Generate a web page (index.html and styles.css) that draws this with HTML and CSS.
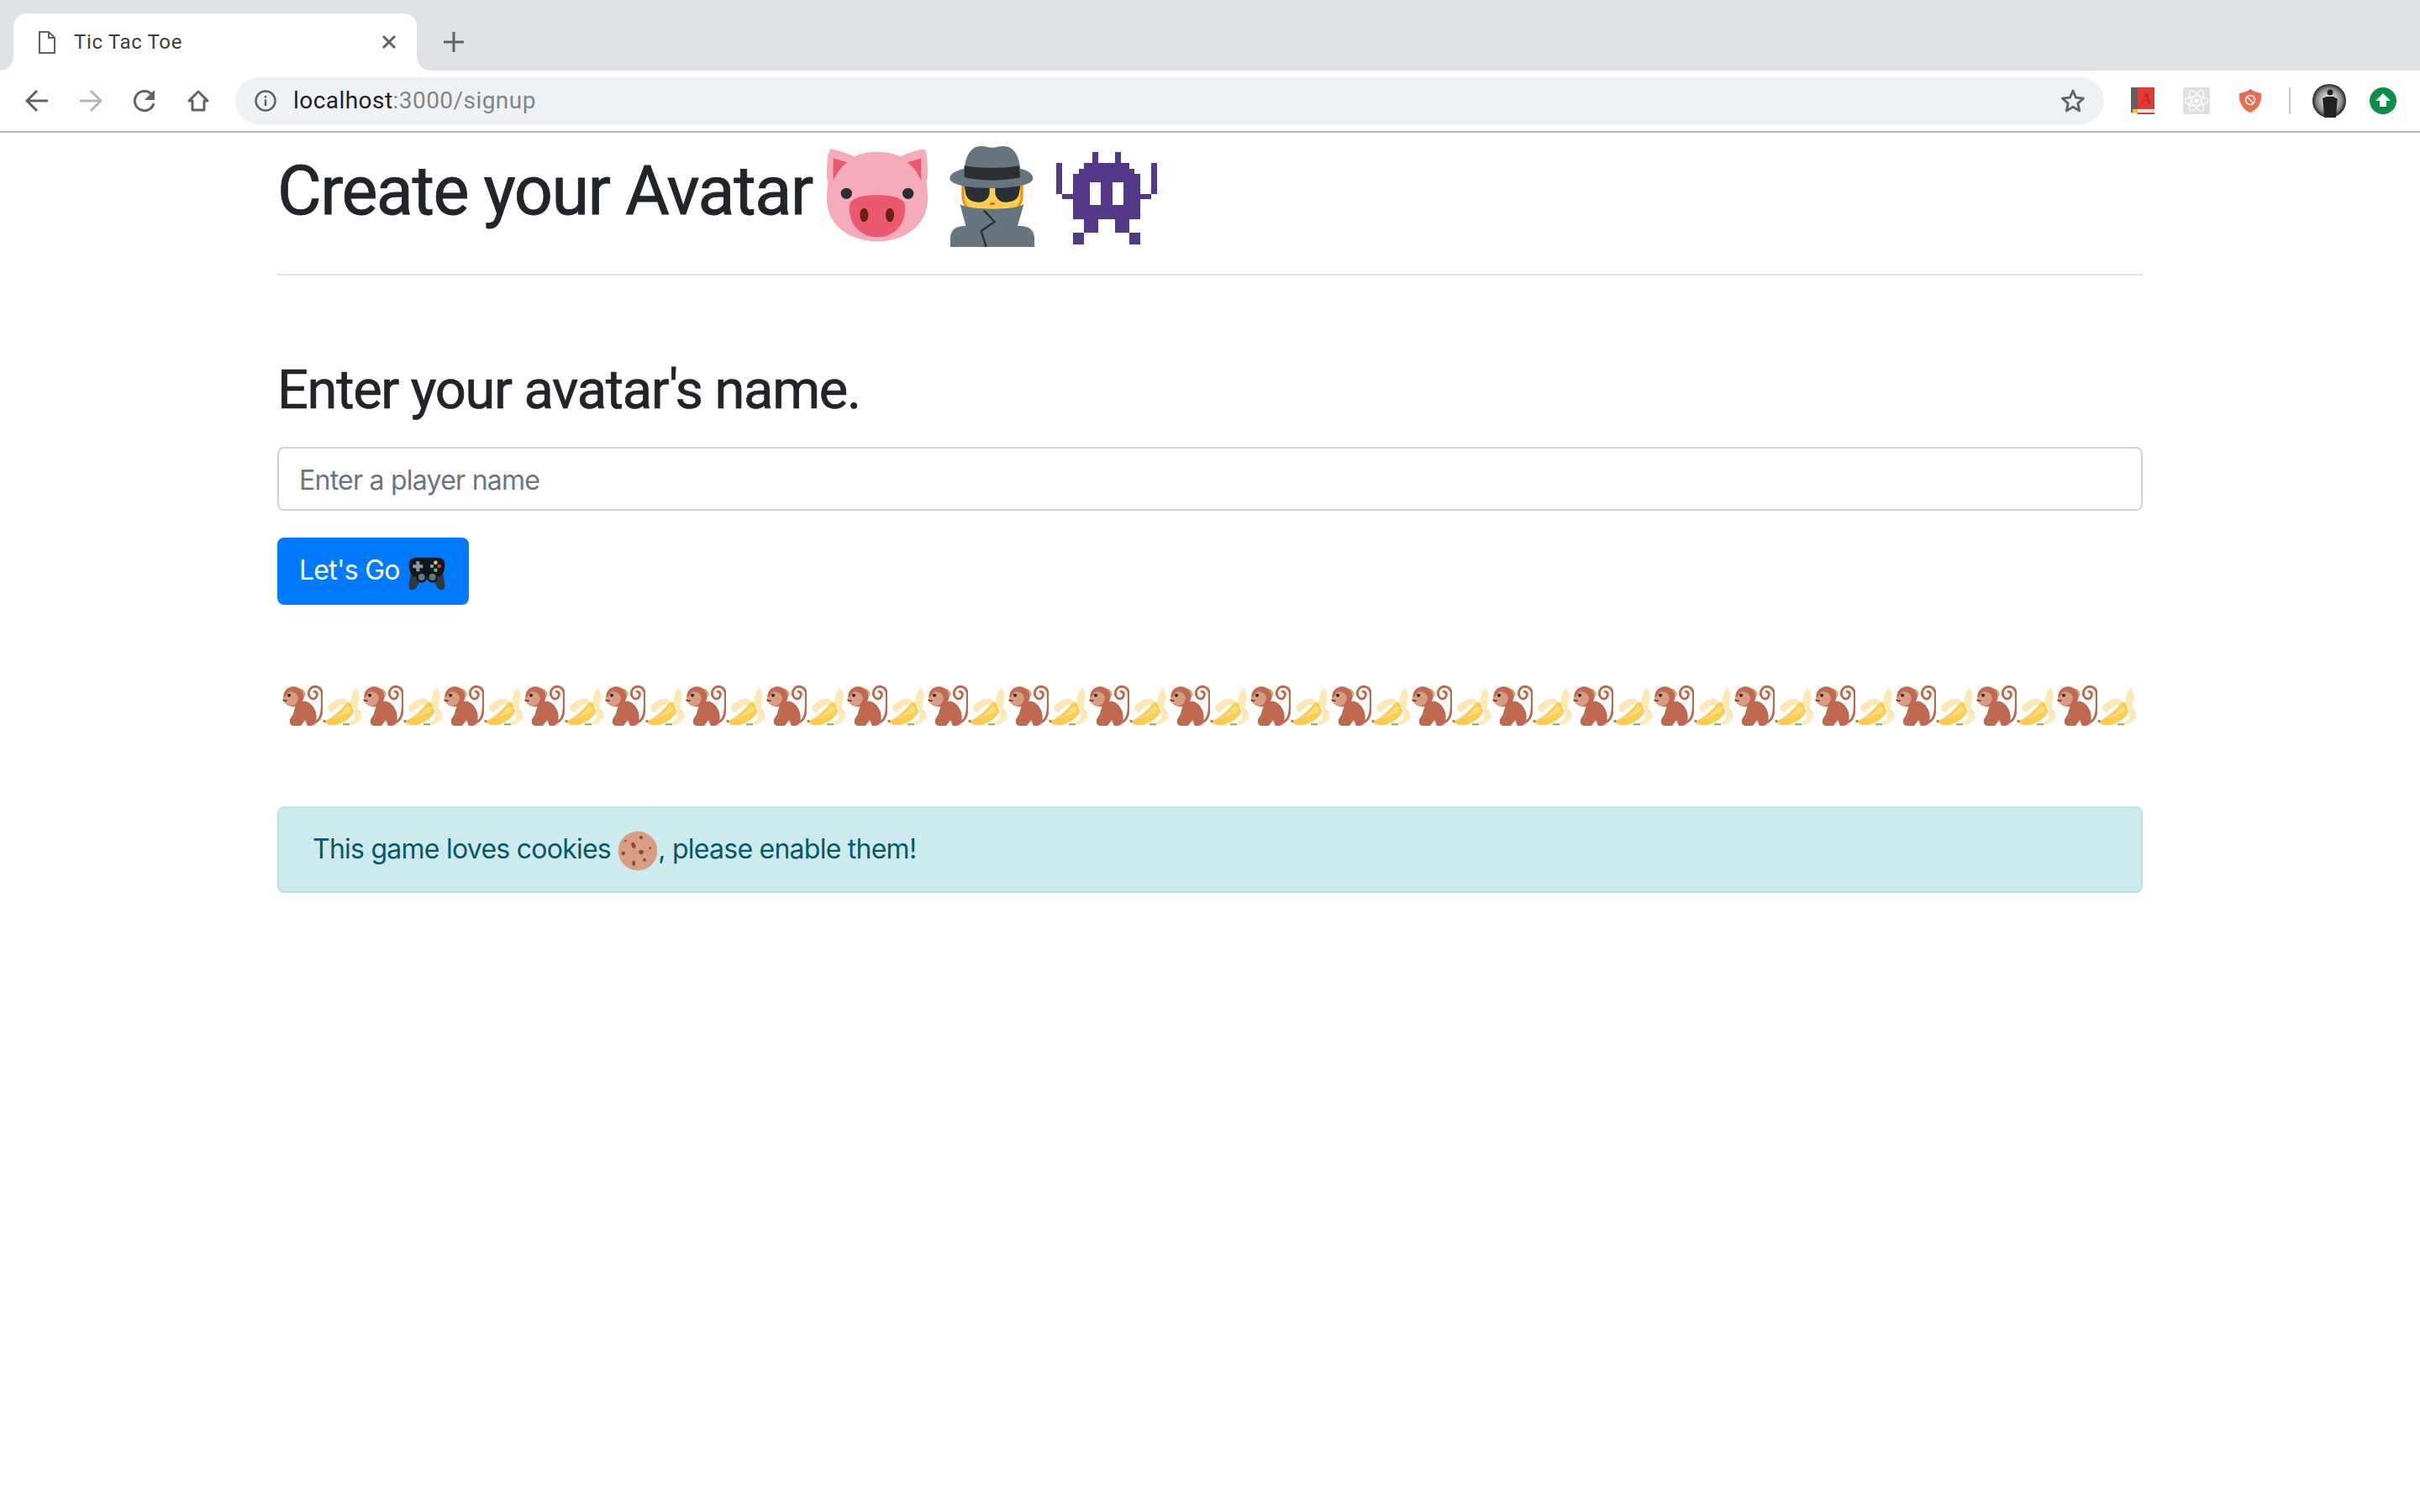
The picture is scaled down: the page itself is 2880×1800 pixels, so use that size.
FILE: index.html
```html
<!DOCTYPE html>
<html lang="en">
<head>
    <meta charset="UTF-8">
    <meta name="viewport" content="width=device-width, initial-scale=1.0">
    <title>Tic Tac Toe</title>
    <link rel="stylesheet" href="styles.css">
</head>
<body>
    <svg class="defs" aria-hidden="true">
        <symbol id="monkey" viewBox="0 0 36 36">
            <path d="M29 33C34 31 35.500 25 35.500 18V8C35.500 4 33 1 29 1 26 1 23.500 4 23.500 7 23.500 10 25.500 12 27.500 12 29.500 12 31 10 31 8 31 6.500 30 5.500 28.500 5.500" fill="none" stroke="#C1694F" stroke-width="2.200" stroke-linecap="round"/>
            <path d="M13 14h8c6 2 9.500 8 9.500 14 0 4-1 8-5 8h-3c-1-2-2-4-2-5l-4 5h-7c-3-1-3.500-3-2.500-6 1-2 3-4 3-6z" fill="#C1694F"/>
            <circle cx="16" cy="7.500" r="4.500" fill="#D99E82"/>
            <circle cx="10" cy="10" r="9" fill="#C1694F"/>
            <path d="M0 13c1-2 3-3 4-5 1-3 4-3 6-2 4 1 5 6 3 9-2 3-6 4-8 3-2-1-4-3-5-5z" fill="#D99E82"/>
            <circle cx="6" cy="8.800" r="1.500" fill="#292F33"/>
            <path d="M1 13c1 1 2 1 3 .5" fill="none" stroke="#662113" stroke-width="1" stroke-linecap="round"/>
        </symbol>
        <symbol id="banana" viewBox="0 0 36 36">
            <path d="M29 2C33 3 33 12 31 20L24 19C25 12 26 6 29 2z" fill="#FFE8B6"/>
            <path d="M4.500 20C6 15 13 11 20 12L25 17C18 16 12 19 9 24 7 24 5 23 4.500 20z" fill="#FFE8B6"/>
            <path d="M28 19C33 20 36 25 34 29 32 33 28 35 24 35L21 34C26 33 30 29 29 25z" fill="#FFE8B6"/>
            <path d="M1 32C6 30 15 24 19 18 21 15 24 14 25 16L28 23C27 27 20 33 13 35 8 36 2 35 1 32z" fill="#FFCC4D"/>
            <path d="M8 29C14 27 19 23 22 18L26 20C24 24 16 29 8 29z" fill="#FFD983"/>
            <circle cx="1.500" cy="31.800" r="1.200" fill="#C1694F"/>
            <path d="M18 34h6v1.500h-6z" fill="#77B255"/>
        </symbol>
        <symbol id="monkey-banana" viewBox="0 0 96 48">
            <use href="#monkey" x="0" y="0" width="48" height="48"/>
            <use href="#banana" x="48" y="0" width="48" height="48"/>
        </symbol>
    </svg>

    <header class="browser">
        <div class="tabstrip">
            <div class="tab">
                <svg class="tab-file" viewBox="0 0 20 27"><path d="M1 1h11l7 7v18H1zM12 1v7h7" fill="none" stroke="#5f6368" stroke-width="2"/></svg>
                <span class="tab-title">Tic Tac Toe</span>
                <svg class="tab-close" viewBox="0 0 18 18"><path d="M2 2l14 14M16 2L2 16" stroke="#5f6368" stroke-width="3"/></svg>
            </div>
            <svg class="new-tab" viewBox="0 0 24 24"><path d="M12 0v24M0 12h24" stroke="#5f6368" stroke-width="3"/></svg>
        </div>
        <div class="toolbar">
            <span class="nav-btn"><svg viewBox="0 0 28 28"><path d="M27 14H3M14 2L2 14l12 12" fill="none" stroke="#5f6368" stroke-width="3"/></svg></span>
            <span class="nav-btn"><svg viewBox="0 0 28 28"><path d="M1 14h24M14 2l12 12-12 12" fill="none" stroke="#b4b6b9" stroke-width="3"/></svg></span>
            <span class="nav-btn"><svg viewBox="0 0 28 28"><path d="M25 17a11.500 11.500 0 1 1-2.500-10.500" fill="none" stroke="#5f6368" stroke-width="3"/><path d="M26 1v12H14z" fill="#5f6368"/></svg></span>
            <span class="nav-btn"><svg viewBox="0 0 28 28"><path d="M14 3L3 14h4v11h14V14h4z" fill="none" stroke="#5f6368" stroke-width="3" stroke-linejoin="round"/></svg></span>
            <div class="omnibox">
                <svg class="info" viewBox="0 0 26 26"><circle cx="13" cy="13" r="11.500" fill="none" stroke="#5f6368" stroke-width="2.500"/><path d="M13 11.500V19M13 7v2.500" stroke="#5f6368" stroke-width="2.500"/></svg>
                <span class="url">localhost<span class="url-rest">:3000/signup</span></span>
                <svg class="star" viewBox="0 0 30 30"><path d="M15 3l3.600 8.200 8.900.9-6.700 6 1.900 8.800L15 22.300l-7.700 4.600 1.900-8.800-6.700-6 8.900-.9z" fill="none" stroke="#5f6368" stroke-width="2.800" stroke-linejoin="round"/></svg>
            </div>
            <div class="extensions">
                <span class="ext-btn"><svg viewBox="0 0 28 32">
                    <rect width="28" height="32" fill="#fff"/>
                    <rect x="0" y="0" width="8" height="30" fill="#616161"/>
                    <rect x="8" y="0" width="20" height="26" fill="#E53935"/>
                    <text x="18" y="20" class="book-letter">A</text>
                    <rect x="8" y="27" width="20" height="2" fill="#e0e0e0"/>
                    <rect x="8" y="30" width="20" height="2" fill="#E53935"/>
                    <path d="M2 26h6v6l-3-2-3 2z" fill="#FBC02D"/>
                </svg></span>
                <span class="ext-btn"><svg viewBox="0 0 32 32">
                    <rect width="32" height="32" rx="3" fill="#e0e0e0"/>
                    <g fill="none" stroke="#fff" stroke-width="1.200"><ellipse cx="16" cy="16" rx="14" ry="5.500"/><ellipse cx="16" cy="16" rx="14" ry="5.500" transform="rotate(60 16 16)"/><ellipse cx="16" cy="16" rx="14" ry="5.500" transform="rotate(120 16 16)"/></g>
                    <circle cx="16" cy="16" r="2.500" fill="#fff"/>
                </svg></span>
                <span class="ext-btn"><svg viewBox="0 0 32 32">
                    <defs><linearGradient id="shield-fill" x1="0" x2="0" y1="0" y2="1"><stop offset="0" stop-color="#F8615F"/><stop offset="1" stop-color="#E8713A"/></linearGradient></defs>
                    <path d="M16 2c4 3 8 4 13 5 1 10-3 19-13 23C6 26 2 17 3 7c5-1 9-2 13-5z" fill="url(#shield-fill)"/>
                    <circle cx="16" cy="15" r="5.500" fill="none" stroke="#fff" stroke-width="1.600"/><path d="M12.500 11.500l7 7" stroke="#fff" stroke-width="1.600"/>
                </svg></span>
                <span class="ext-divider"></span>
                <span class="ext-btn"><svg class="avatar" viewBox="0 0 40 40">
                    <defs><radialGradient id="avatar-bg"><stop offset="0.3" stop-color="#ddd"/><stop offset="0.75" stop-color="#888"/><stop offset="1" stop-color="#222"/></radialGradient></defs>
                    <circle cx="20" cy="20" r="20" fill="url(#avatar-bg)"/>
                    <circle cx="21" cy="10" r="3.500" fill="#222"/>
                    <path d="M12 17l5-2h8l5 3-1 8-1 14H14l-1-14z" fill="#222"/>
                </svg></span>
                <span class="ext-btn"><svg viewBox="0 0 32 32">
                    <circle cx="16" cy="16" r="16" fill="#0B8F44"/>
                    <path d="M16 7l9 9h-5v7h-8v-7H7z" fill="#fff"/>
                </svg></span>
            </div>
        </div>
    </header>

    <main class="container">
        <h1 class="page-title">Create your Avatar
            <svg class="emoji-big" viewBox="0 0 36 36">
                <path d="M0 11C0 6 .3 2 1.300 1 4 1.500 7.500 2.500 9.800 3.800 12 2.500 15 2 18 2s6 .5 8.200 1.800C28.500 2.500 32 1.500 34.800 1c1 1 1.200 5 1.200 10-.1.500-.2 1-.5 1.500.3 2 .5 4 .5 6.500 0 9-8 15-18 15S0 28 0 19c0-2.500.2-4.500.5-6.500-.3-.5-.4-1-.5-1.500z" fill="#F4ABBA"/>
                <path d="M2.300 4.300L7.300 5.800C5 7.500 3.300 10 2.300 12.300zM33.700 4.300L28.700 5.800c2.300 1.700 4 4.200 5 6.500z" fill="#EA596E"/>
                <circle cx="7" cy="16.900" r="2" fill="#292F33"/>
                <circle cx="29" cy="16.900" r="2" fill="#292F33"/>
                <path d="M8 22c0-3 3-4.500 10-4.500S28 19 28 22c0 6-4 10.500-10 10.500S8 28 8 22z" fill="#EA596E"/>
                <ellipse cx="13.300" cy="24.600" rx="1.500" ry="2.500" fill="#662113"/>
                <ellipse cx="22.500" cy="24.600" rx="1.500" ry="2.500" fill="#662113"/>
            </svg>
            <svg class="emoji-big" viewBox="0 0 36 36">
                <path d="M7 14c0-2 2-3 4-3h14c2 0 4 1 4 3v3c0 3-1 6-4 6H11c-3 0-4-3-4-6z" fill="#F4900C"/>
                <path d="M8 13h20v5c0 3-2 5-4 5H12c-2 0-4-2-4-5z" fill="#FFCC4D"/>
                <path d="M7.800 13h9.200v4c-.5 2-2 3-3.500 3-2 0-4.500-.5-5-3zM19 13h9.200l-.7 4c-.5 2.500-3 3-5 3-1.500 0-3-1-3.500-3z" fill="#292F33"/>
                <ellipse cx="18" cy="20.500" rx="1" ry=".5" fill="#C1694F"/>
                <path d="M2.800 11.500C2.800 9.500 6 8.500 8 8c.5-4 2-8 6-8 1.500 0 2.500.5 4 .5S20.500 0 22 0c4 0 5.500 4 6 8 2 .5 4.500 1.500 4.500 3.500 0 2-5 3.500-14.800 3.500S2.800 13.500 2.800 11.500z" fill="#66757F"/>
                <path d="M8 7c5 1 15 1 19.500 0l.5 4c-5 1.500-15 1.500-20 0z" fill="#292F33"/>
                <path d="M3 36v-3c0-3 2-4.500 5-4.500h.5L6.500 20.800C9 22 13 22.400 18 22.400s9-.4 11.200-1.600L27 28.500h1c3 0 5 1.500 5 4.500v3z" fill="#66757F"/>
                <path d="M15 23l3.800 4-4.800 3.300 1.800 5.700" fill="none" stroke="#292F33" stroke-width=".700"/>
            </svg>
            <svg class="emoji-big" viewBox="0 0 36 36" shape-rendering="crispEdges">
                <path fill-rule="evenodd" fill="#553788" d="M13 2h2v4h6V2h2v4h3v2h2v2h2v7h4V6h2v11h-2v2h-4v7h-4v5h4v4h-4v-4h-5v-5h-6v5h-5v4H6v-4h4v-5H6v-7H2v-2H0V6h2v11h4v-7h2V8h2V6h3zM12 13v8h4v-8zM20 13v8h4v-8z"/>
            </svg>
        </h1>
        <hr class="rule">

        <form class="signup">
            <h2 class="form-title">Enter your avatar's name.</h2>
            <input class="name-input" type="text" placeholder="Enter a player name">
            <button class="go-btn" type="button">Let's Go
                <svg class="emoji-small" viewBox="0 0 36 36">
                    <path d="M2 30c0 3 1 4 3 4 3 0 5-4 7-9h12c2 5 4 9 7 9 2 0 3-1 3-4 0-3-2-12-3-16H5C4 18 2 27 2 30z" fill="#31373D"/>
                    <path d="M2 11c0-4 3-6 6-6h20c3 0 6 2 6 6 0 5-1 11-7 11H9c-6 0-7-6-7-11z" fill="#14171A"/>
                    <circle cx="13.300" cy="23" r="4.500" fill="#14171A"/><circle cx="23" cy="23" r="4.500" fill="#14171A"/>
                    <circle cx="13.300" cy="22.500" r="3" fill="#66757F"/><circle cx="23" cy="22.500" r="3" fill="#66757F"/>
                    <path d="M8.500 8.500h3v3h3v3h-3v3h-3v-3h-3v-3h3z" fill="#8899A6"/>
                    <circle cx="25.800" cy="9.500" r="1.700" fill="#FFCC4D"/>
                    <circle cx="29" cy="12.800" r="1.700" fill="#DD2E44"/>
                    <circle cx="22.500" cy="12.800" r="1.700" fill="#55ACEE"/>
                    <circle cx="25.800" cy="16.300" r="1.700" fill="#77B255"/>
                </svg>
            </button>
        </form>

        <div class="monkey-row">
            <svg class="pair"><use href="#monkey-banana"/></svg>
            <svg class="pair"><use href="#monkey-banana"/></svg>
            <svg class="pair"><use href="#monkey-banana"/></svg>
            <svg class="pair"><use href="#monkey-banana"/></svg>
            <svg class="pair"><use href="#monkey-banana"/></svg>
            <svg class="pair"><use href="#monkey-banana"/></svg>
            <svg class="pair"><use href="#monkey-banana"/></svg>
            <svg class="pair"><use href="#monkey-banana"/></svg>
            <svg class="pair"><use href="#monkey-banana"/></svg>
            <svg class="pair"><use href="#monkey-banana"/></svg>
            <svg class="pair"><use href="#monkey-banana"/></svg>
            <svg class="pair"><use href="#monkey-banana"/></svg>
            <svg class="pair"><use href="#monkey-banana"/></svg>
            <svg class="pair"><use href="#monkey-banana"/></svg>
            <svg class="pair"><use href="#monkey-banana"/></svg>
            <svg class="pair"><use href="#monkey-banana"/></svg>
            <svg class="pair"><use href="#monkey-banana"/></svg>
            <svg class="pair"><use href="#monkey-banana"/></svg>
            <svg class="pair"><use href="#monkey-banana"/></svg>
            <svg class="pair"><use href="#monkey-banana"/></svg>
            <svg class="pair"><use href="#monkey-banana"/></svg>
            <svg class="pair"><use href="#monkey-banana"/></svg>
            <svg class="pair"><use href="#monkey-banana"/></svg>
        </div>

        <div class="alert">This game loves cookies
            <svg class="emoji-small" viewBox="0 0 36 36">
                <circle cx="18" cy="18" r="17.500" fill="#D99E82"/>
                <g fill="#8A4B38">
                    <ellipse cx="14.200" cy="13" rx="1.800" ry="2.800" transform="rotate(-20 14.200 13)"/>
                    <circle cx="21" cy="19" r="2"/>
                    <circle cx="5" cy="20" r="1.700"/>
                    <ellipse cx="14.400" cy="29" rx="1.300" ry="2.300"/>
                    <circle cx="24" cy="26" r="1.400"/>
                    <circle cx="21" cy="6" r="1.500"/>
                    <circle cx="7" cy="9" r="1"/>
                    <circle cx="29" cy="15.500" r="1"/>
                </g>
            </svg>, please enable them!</div>
    </main>
</body>
</html>
```

FILE: styles.css
```css
* {
    box-sizing: border-box;
}
html, body {
    margin: 0;
}
body {
    font-family: Inter, "Liberation Sans", sans-serif;
    font-size: 32px;
    line-height: 1.5;
    letter-spacing: -.75px;
    color: #212529;
    background-color: #fff;
}
.defs {
    display: none;
}

/* browser chrome */
.browser {
    font-family: Roboto, "Liberation Sans", sans-serif;
    letter-spacing: normal;
}
.tabstrip {
    display: flex;
    align-items: center;
    height: 84px;
    padding: 16px 0 0 16px;
    background-color: #dee1e6;
}
.tab {
    position: relative;
    display: flex;
    align-items: center;
    width: 480px;
    height: 68px;
    padding: 0 24px 0 30px;
    background-color: #fff;
    border-radius: 16px 16px 0 0;
}
.tab::before, .tab::after {
    content: "";
    position: absolute;
    bottom: 0;
    width: 16px;
    height: 16px;
}
.tab::before {
    left: -16px;
    background: radial-gradient(circle at 0 0, #dee1e6 15.500px, #fff 16px);
}
.tab::after {
    right: -16px;
    background: radial-gradient(circle at 100% 0, #dee1e6 15.500px, #fff 16px);
}
.tab-file {
    width: 20px;
    height: 27px;
}
.tab-title {
    flex: 1;
    margin-left: 22px;
    font-size: 24px;
    letter-spacing: .65px;
    color: #3c4043;
}
.tab-close {
    width: 18px;
    height: 18px;
}
.new-tab {
    width: 24px;
    height: 24px;
    margin-left: 32px;
}
.toolbar {
    display: flex;
    align-items: center;
    height: 74px;
    padding: 0 12px;
    background-color: #fff;
    border-bottom: 2px solid #b8b9ba;
}
.nav-btn {
    display: flex;
    justify-content: center;
    width: 64px;
}
.nav-btn svg {
    width: 28px;
    height: 28px;
}
.omnibox {
    display: flex;
    flex: 1;
    align-items: center;
    height: 56px;
    margin: 0 14px 0 12px;
    padding: 0 22px 0 23px;
    background-color: #eff2f4;
    border-radius: 28px;
}
.info {
    width: 26px;
    height: 26px;
}
.url {
    flex: 1;
    margin-left: 20px;
    font-size: 28px;
    letter-spacing: .45px;
    color: #202124;
}
.url-rest {
    color: #80868b;
}
.star {
    width: 30px;
    height: 30px;
}
.extensions {
    display: flex;
    align-items: center;
}
.ext-btn {
    display: flex;
    justify-content: center;
    width: 64px;
}
.ext-btn svg {
    width: 32px;
    height: 32px;
}
.ext-btn svg.avatar {
    width: 40px;
    height: 40px;
}
.ext-divider {
    width: 2px;
    height: 32px;
    margin: 0 14px;
    background-color: #c8c8c8;
}
.book-letter {
    font-family: "Liberation Serif", serif;
    font-size: 18px;
    font-weight: bold;
    fill: #C62828;
    text-anchor: middle;
}

/* page */
.container {
    max-width: 2280px;
    margin: 0 auto;
    padding: 0 30px;
}
.page-title {
    margin: 0;
    padding-top: 16px;
    font-family: Roboto, Inter, sans-serif;
    font-size: 81px;
    font-weight: 400;
    line-height: 1.2;
    letter-spacing: -1.5px;
    -webkit-text-stroke: .8px #212529;
}
.emoji-big {
    width: 120px;
    height: 120px;
    margin: 0 -1px;
    vertical-align: middle;
}
.rule {
    height: 2px;
    margin: 32px 0 0;
    border: 0;
    background-color: rgba(0,0,0,.1);
}
.form-title {
    margin: 98px 0 29px;
    font-family: Roboto, Inter, sans-serif;
    font-size: 65px;
    font-weight: 400;
    line-height: 77px;
    letter-spacing: -1.32px;
    -webkit-text-stroke: .7px #212529;
}
.name-input {
    display: block;
    width: 100%;
    height: 76px;
    padding: 13px 24px 11px;
    font-family: inherit;
    font-size: 32px;
    letter-spacing: -.75px;
    color: #495057;
    background-color: #fff;
    border: 2px solid #ced4da;
    border-radius: 8px;
}
.name-input::placeholder {
    color: #6c757d;
}
.go-btn {
    display: block;
    height: 80px;
    margin-top: 32px;
    padding: 2px 24px 0;
    font-family: inherit;
    font-size: 32px;
    letter-spacing: -.75px;
    color: #fff;
    background-color: #007bff;
    border: 2px solid #007bff;
    border-radius: 8px;
}
.emoji-small {
    width: 48px;
    height: 48px;
    vertical-align: middle;
}
.monkey-row {
    display: flex;
    justify-content: center;
    margin-top: 96px;
}
.pair {
    width: 96px;
    height: 48px;
}
.alert {
    margin-top: 96px;
    padding: 25px 40px 24px;
    color: #055a65;
    background-color: #cdeaee;
    border: 2px solid #b8e3e9;
    border-radius: 8px;
}
```
